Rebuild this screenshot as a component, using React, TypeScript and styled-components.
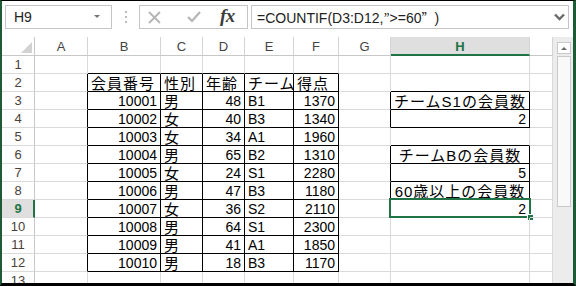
import React from 'react';
import styled, { createGlobalStyle } from 'styled-components';

const GREEN = '#217346';
const GRID = '#dadada';
const BLACK = '#000';

const Global = createGlobalStyle`
  html, body { margin: 0; padding: 0; background: #fff; }
  body { font-family: "Liberation Sans", "Noto Sans CJK JP", sans-serif; }
`;

const Frame = styled.div`
  width: 576px;
  height: 286px;
  box-sizing: border-box;
  border-top: 1px solid #000;
  border-bottom: 3px solid #000;
  border-left: 2px solid #1d5a36;
  border-right: 3px solid #1d5a36;
  display: flex;
  flex-direction: column;
  overflow: hidden;
  background: #fff;
`;

const FormulaBar = styled.div`
  height: 36px;
  flex: none;
  box-sizing: border-box;
  padding: 4px 0 0 3px;
  display: flex;
  align-items: flex-start;
`;

const Box = styled.div<{ $w: number }>`
  width: ${(p) => p.$w}px;
  height: 24px;
  box-sizing: border-box;
  border: 1px solid #c6c6c6;
  display: flex;
  align-items: center;
  flex: none;
`;

const NameBox = styled(Box)`
  justify-content: space-between;
  padding: 0 11px 0 8px;
  font-size: 14px;
  color: #222;
`;

const DropTri = styled.span`
  width: 0;
  height: 0;
  border-left: 3px solid transparent;
  border-right: 3px solid transparent;
  border-top: 3px solid #777;
  margin-top: -2px;
`;

const Dots = styled.div`
  width: 27px;
  height: 24px;
  display: flex;
  flex-direction: column;
  align-items: center;
  justify-content: center;
  gap: 3px;
  flex: none;
`;

const Dot = styled.span`
  width: 2px;
  height: 2px;
  background: #bcbcbc;
`;

const FxBox = styled(Box)`
  padding-left: 8px;
`;

const FxText = styled.span`
  font-family: "Liberation Serif", serif;
  font-style: italic;
  font-weight: bold;
  font-size: 19px;
  color: #3c3c3c;
  margin-left: 19px;
  margin-top: -2px;
  letter-spacing: -0.5px;
`;

const FormulaBox = styled(Box)`
  margin-left: 3px;
  justify-content: space-between;
  padding: 0 3px 0 5px;
  font-size: 14px;
  color: #222;
`;

const Q = styled.span<{ $full?: boolean }>`
  font-family: "Noto Sans CJK JP", sans-serif;
  font-size: 13px;
  font-feature-settings: ${(p) => (p.$full ? '"fwid" 1' : 'normal')};
`;

const Sheet = styled.div`
  flex: 1;
  display: flex;
  min-height: 0;
`;

const Grid = styled.div`
  display: grid;
  grid-template-columns: 33px 53px 73px 42px 42px 49px 45px 52px 139px 23px;
  grid-template-rows: 19px repeat(13, 18px);
  width: 551px;
  overflow: hidden;
  flex: none;
`;

const Corner = styled.div`
  box-sizing: border-box;
  border-right: 1px solid #c8c8c8;
  border-bottom: 1px solid #c8c8c8;
  display: flex;
  align-items: flex-end;
  justify-content: flex-end;
  padding: 0 2px 2px 0;
`;

const ColHead = styled.div<{ $active?: boolean }>`
  box-sizing: border-box;
  border-right: 1px solid #d4d4d4;
  border-bottom: ${(p) => (p.$active ? `2px solid ${GREEN}` : '1px solid #c8c8c8')};
  background: ${(p) => (p.$active ? '#dfdfdf' : '#fff')};
  color: ${(p) => (p.$active ? GREEN : '#444')};
  font-weight: ${(p) => (p.$active ? 'bold' : 'normal')};
  font-size: 13px;
  display: flex;
  align-items: center;
  justify-content: center;
  padding-top: ${(p) => (p.$active ? '1px' : '0')};
`;

const RowHead = styled.div<{ $active?: boolean }>`
  box-sizing: border-box;
  border-right: ${(p) => (p.$active ? `2px solid ${GREEN}` : '1px solid #c8c8c8')};
  border-bottom: 1px solid ${GRID};
  background: ${(p) => (p.$active ? '#dfdfdf' : '#fff')};
  color: ${(p) => (p.$active ? GREEN : '#4a4038')};
  font-weight: ${(p) => (p.$active ? 'bold' : 'normal')};
  font-size: 13px;
  display: flex;
  align-items: center;
  justify-content: center;
  padding-left: ${(p) => (p.$active ? '1px' : '0')};
`;

type Align = 'left' | 'right' | 'center';

const Cell = styled.div<{ $rb: string; $bb: string; $align: Align; $jp?: boolean }>`
  position: relative;
  box-sizing: border-box;
  border-right: 1px solid ${(p) => p.$rb};
  border-bottom: 1px solid ${(p) => p.$bb};
  display: flex;
  align-items: flex-end;
  justify-content: ${(p) =>
    p.$align === 'right' ? 'flex-end' : p.$align === 'center' ? 'center' : 'flex-start'};
  padding: 0 3px 0 3px;
  font-size: ${(p) => (p.$jp ? '15px' : '14px')};
  letter-spacing: ${(p) => (p.$jp ? '1px' : '0')};
  line-height: 15px;
  white-space: nowrap;
  color: #000;
`;

const Selection = styled.div`
  position: absolute;
  left: -2px;
  top: -2px;
  right: -2px;
  bottom: -1px;
  border: 2px solid ${GREEN};
  pointer-events: none;
`;

const Handle = styled.div`
  position: absolute;
  right: -5px;
  bottom: -5px;
  width: 5px;
  height: 5px;
  background: ${GREEN};
  border: 1px solid #fff;
`;

const ScrollTrack = styled.div`
  width: 20px;
  flex: none;
  background: #ececec;
  box-sizing: border-box;
  padding: 5px 0 0 4px;
  display: flex;
  flex-direction: column;
  gap: 2px;
`;

const ScrollBtn = styled.div`
  width: 14px;
  height: 12px;
  box-sizing: border-box;
  border: 1px solid #c9c9c9;
  background: #fff;
  display: flex;
  align-items: center;
  justify-content: center;
`;

const UpTri = styled.span`
  width: 0;
  height: 0;
  border-left: 3px solid transparent;
  border-right: 3px solid transparent;
  border-bottom: 3px solid #6a6a6a;
`;

const Thumb = styled.div`
  width: 14px;
  height: 151px;
  box-sizing: border-box;
  border: 1px solid #c9c9c9;
  background: #f9f9f9;
`;

const LETTERS = ['A', 'B', 'C', 'D', 'E', 'F', 'G', 'H', ''];

type CellData = { v: string; a: Align; jp?: boolean };

const members = [
  ['10001', '男', '48', 'B1', '1370'],
  ['10002', '女', '40', 'B3', '1340'],
  ['10003', '女', '34', 'A1', '1960'],
  ['10004', '男', '65', 'B2', '1310'],
  ['10005', '女', '24', 'S1', '2280'],
  ['10006', '男', '47', 'B3', '1180'],
  ['10007', '女', '36', 'S2', '2110'],
  ['10008', '男', '64', 'S1', '2300'],
  ['10009', '男', '41', 'A1', '1850'],
  ['10010', '男', '18', 'B3', '1170'],
];

const data: Record<string, CellData> = {};
['会員番号', '性別', '年齢', 'チーム', '得点'].forEach((h, i) => {
  data[`2-${i + 1}`] = { v: h, a: 'left', jp: true };
});
members.forEach((m, r) => {
  m.forEach((v, c) => {
    const isNum = c === 0 || c === 2 || c === 4;
    data[`${r + 3}-${c + 1}`] = { v, a: isNum ? 'right' : 'left', jp: c === 1 };
  });
});
data['3-7'] = { v: 'チームS1の会員数', a: 'center', jp: true };
data['4-7'] = { v: '2', a: 'right' };
data['6-7'] = { v: 'チームBの会員数', a: 'center', jp: true };
data['7-7'] = { v: '5', a: 'right' };
data['8-7'] = { v: '60歳以上の会員数', a: 'center', jp: true };
data['9-7'] = { v: '2', a: 'right' };

const bordered = (r: number, c: number) => {
  if (r >= 2 && r <= 12 && c >= 1 && c <= 5) return true;
  if (c === 7 && [3, 4, 6, 7, 8, 9].includes(r)) return true;
  return false;
};

const XIcon = () => (
  <svg width="13" height="13" viewBox="0 0 13 13">
    <path d="M1 1 L12 12 M12 1 L1 12" stroke="#b5b5b5" strokeWidth="1.8" fill="none" />
  </svg>
);

const CheckIcon = () => (
  <svg width="14" height="12" viewBox="0 0 14 12" style={{ marginLeft: 26 }}>
    <path d="M1 6 L5 10 L13 1" stroke="#b5b5b5" strokeWidth="2.2" fill="none" />
  </svg>
);

const Chevron = () => (
  <svg width="11" height="8" viewBox="0 0 11 8">
    <path d="M1 1.5 L5.5 6 L10 1.5" stroke="#6a6a6a" strokeWidth="2.4" fill="none" />
  </svg>
);

const CornerTri = () => (
  <svg width="11" height="11" viewBox="0 0 11 11">
    <polygon points="11,0 11,11 0,11" fill="#d2d2d2" />
  </svg>
);

export default function App() {
  const rows: React.ReactNode[] = [];
  for (let r = 1; r <= 13; r++) {
    rows.push(
      <RowHead key={`rh${r}`} $active={r === 9}>
        {r}
      </RowHead>
    );
    for (let c = 0; c < 9; c++) {
      const d = data[`${r}-${c}`];
      const rb = bordered(r, c) || bordered(r, c + 1) ? BLACK : GRID;
      const bb = bordered(r, c) || bordered(r + 1, c) ? BLACK : GRID;
      const sel = r === 9 && c === 7;
      rows.push(
        <Cell key={`${r}-${c}`} $rb={rb} $bb={bb} $align={d ? d.a : 'left'} $jp={d?.jp}>
          {d ? d.v : ''}
          {sel && (
            <Selection>
              <Handle />
            </Selection>
          )}
        </Cell>
      );
    }
  }

  return (
    <>
      <Global />
      <Frame>
        <FormulaBar>
          <NameBox $w={107}>
            <span>H9</span>
            <DropTri />
          </NameBox>
          <Dots>
            <Dot />
            <Dot />
            <Dot />
          </Dots>
          <FxBox $w={109}>
            <XIcon />
            <CheckIcon />
            <FxText>fx</FxText>
          </FxBox>
          <FormulaBox $w={318}>
            <span>
              =COUNTIF(D3:D12,<Q>”</Q>&gt;=60<Q $full>”</Q>)
            </span>
            <Chevron />
          </FormulaBox>
        </FormulaBar>
        <Sheet>
          <Grid>
            <Corner>
              <CornerTri />
            </Corner>
            {LETTERS.map((l, i) => (
              <ColHead key={i} $active={l === 'H'}>
                {l}
              </ColHead>
            ))}
            {rows}
          </Grid>
          <ScrollTrack>
            <ScrollBtn>
              <UpTri />
            </ScrollBtn>
            <Thumb />
          </ScrollTrack>
        </Sheet>
      </Frame>
    </>
  );
}
